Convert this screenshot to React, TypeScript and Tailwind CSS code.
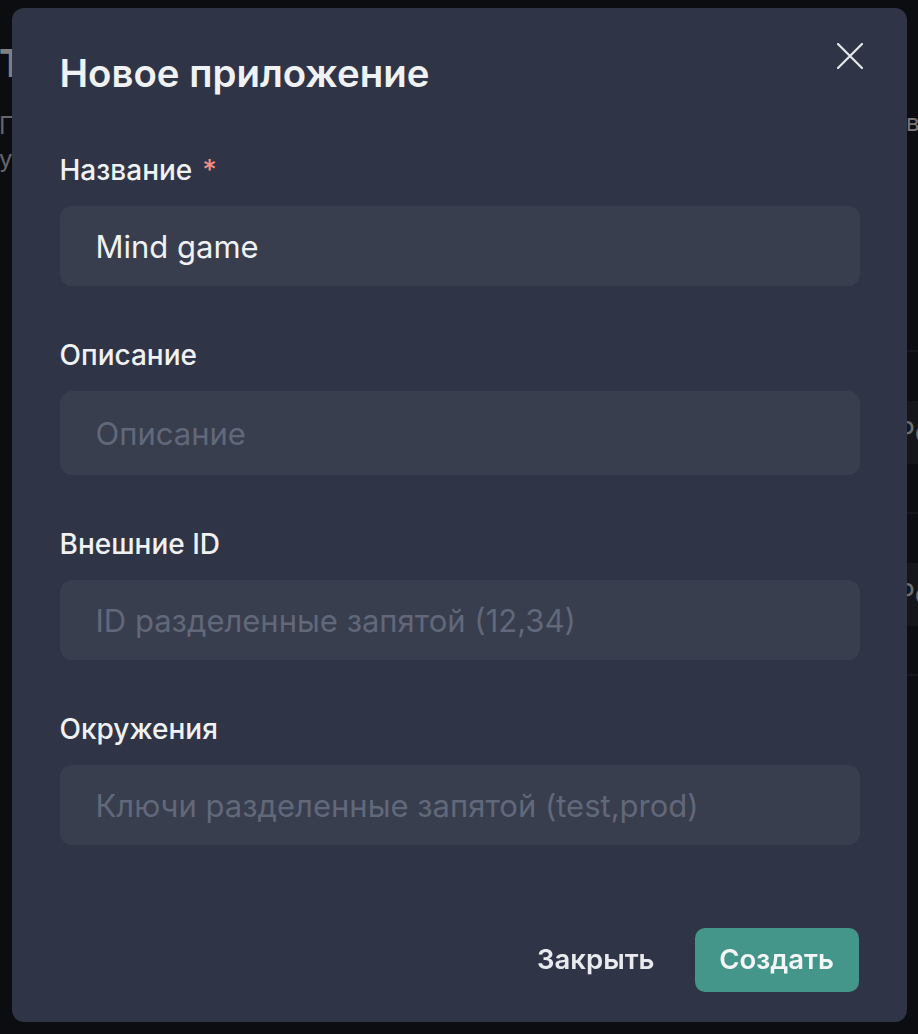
import React from 'react';

const fields = [
  { label: 'Название', required: true, value: 'Mind game', placeholder: '', tall: false },
  { label: 'Описание', required: false, value: '', placeholder: 'Описание', tall: true },
  { label: 'Внешние ID', required: false, value: '', placeholder: 'ID разделенные запятой (12,34)', tall: false },
  { label: 'Окружения', required: false, value: '', placeholder: 'Ключи разделенные запятой (test,prod)', tall: false },
];

const CloseIcon = () => (
  <svg width="26" height="26" viewBox="0 0 26 26" fill="none">
    <path d="M1 1L25 25M25 1L1 25" stroke="#e6e7ea" strokeWidth="2.2" strokeLinecap="round" />
  </svg>
);

export default function App() {
  return (
    <div className="relative min-h-screen w-full overflow-hidden bg-[#0c0d11] font-['Inter','Noto_Sans',sans-serif]">
      {/* Page behind the modal */}
      <div className="flex justify-between">
        <div className="-ml-[1px] flex flex-col pt-[38px]">
          <h1 className="text-[38px] font-bold leading-[50px] text-[#808084]">Тенанты</h1>
          <p className="mt-[20px] text-[24px] leading-[36px] text-[#66666b]">Приложения и их окружения</p>
          <p className="text-[24px] leading-[30px] text-[#66666b]">управление</p>
        </div>
        <div className="-mr-[40px] flex w-[120px] flex-col pt-[108px]">
          <p className="pl-[68px] text-[24px] leading-[30px] text-[#76767a]">в</p>
          <div className="mt-[212px] flex flex-col">
            {[0, 1].map((i) => (
              <div key={i} className="flex h-[162px] flex-col justify-center border-t-2 border-[#16171c]">
                <div className="flex h-[63px] items-center bg-[#15161a] pl-[59px] text-[28px] text-[#6d6e72]">
                  Роль
                </div>
              </div>
            ))}
            <div className="border-t-2 border-[#16171c]" />
          </div>
        </div>
      </div>

      {/* Modal */}
      <div className="fixed inset-0 flex justify-center pt-[8px]">
        <div className="flex h-[1014px] w-[895px] flex-col rounded-[12px] bg-[#2f3546] px-[48px] text-[#f0f1f3]">
          <div className="flex items-start justify-between pt-[41px]">
            <h2 className="text-[38.4px] font-semibold leading-[48px]">Новое приложение</h2>
            <button className="-mr-[15px] -mt-[17px] flex h-[48px] w-[48px] items-center justify-center">
              <CloseIcon />
            </button>
          </div>

          <div className="mt-[57px] flex flex-col gap-[53px]">
            {fields.map((f) => (
              <div key={f.label} className="flex flex-col">
                <label className="flex h-[32px] items-center text-[28px] font-medium">
                  {f.label}
                  {f.required && <span className="ml-[10px] text-[#f58b86]">*</span>}
                </label>
                <input
                  readOnly
                  value={f.value}
                  placeholder={f.placeholder}
                  className={`mt-[20px] w-[800px] rounded-[12px] bg-[#383e4e] px-[36px] text-[31px] text-[#f0f1f3] outline-none placeholder:text-[#61687a] ${
                    f.tall ? 'h-[84px]' : 'h-[80px]'
                  }`}
                />
              </div>
            ))}
          </div>

          <div className="mt-auto flex justify-end gap-[16px] pb-[30px]">
            <button className="flex h-[64px] items-center px-[24px] text-[27.5px] font-semibold text-[#e9eaed]">
              Закрыть
            </button>
            <button className="flex h-[64px] w-[164px] items-center justify-center rounded-[10px] bg-[#44958a] text-[27.5px] font-semibold text-[#f4f6f6]">
              Создать
            </button>
          </div>
        </div>
      </div>
    </div>
  );
}
